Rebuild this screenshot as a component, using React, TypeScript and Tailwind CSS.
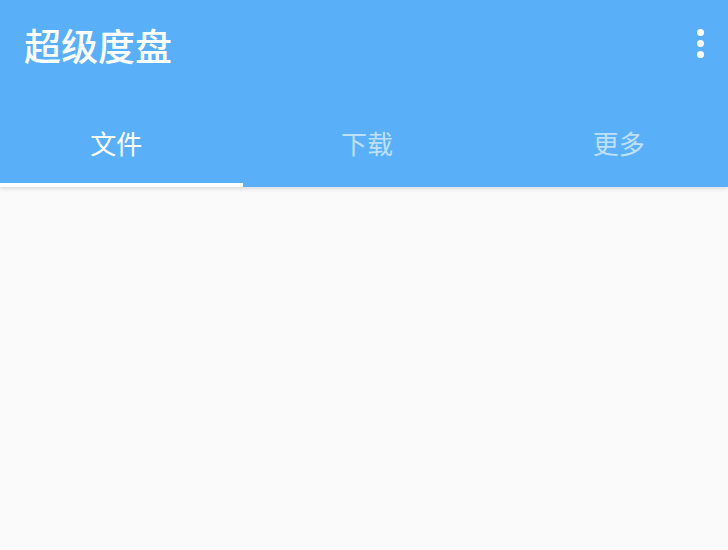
const tabs = [
  { label: '文件', offset: 'pr-[10px]' },
  { label: '下载', offset: 'pl-[6px]' },
  { label: '更多', offset: 'pl-[24px]' },
];

export default function App() {
  const active = 0;

  return (
    <div className="flex h-[550px] w-[728px] flex-col overflow-hidden bg-[#fafafa] font-['Noto_Sans_CJK_SC','Noto_Sans',sans-serif]">
      <header className="relative z-10 bg-[#5aaff9] shadow-[0_2px_4px_rgba(0,0,0,0.12)]">
        <div className="flex h-[90px] items-center justify-between pl-[24px] pr-[16px]">
          <h1 className="text-[37px] font-medium leading-none text-white">超级度盘</h1>
          <button type="button" aria-label="More options" className="-mt-[4px] flex h-[40px] w-[24px] flex-col items-center justify-center gap-[4px]">
            <span className="h-[7px] w-[7px] rounded-full bg-white" />
            <span className="h-[7px] w-[7px] rounded-full bg-white" />
            <span className="h-[7px] w-[7px] rounded-full bg-white" />
          </button>
        </div>

        <nav className="grid h-[97px] grid-cols-3">
          {tabs.map((tab, index) => (
            <div key={tab.label} className="flex flex-col">
              <div
                className={
                  index === active
                    ? `flex flex-1 items-center justify-center pt-[12px] text-[26px] leading-none text-white ${tab.offset}`
                    : `flex flex-1 items-center justify-center pt-[12px] text-[26px] leading-none text-[#bfe0fc] ${tab.offset}`
                }
              >
                {tab.label}
              </div>
              <div className={index === active ? 'h-[4px] bg-white' : 'h-[4px]'} />
            </div>
          ))}
        </nav>
      </header>

      <main className="flex-1" />
    </div>
  );
}
